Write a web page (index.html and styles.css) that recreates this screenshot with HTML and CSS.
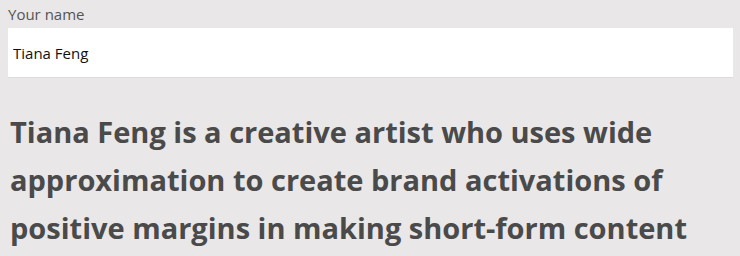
FILE: index.html
```html
<!DOCTYPE html>
<html lang="en">
<head>
    <meta charset="UTF-8">
    <title>Bio generator</title>
    <link rel="stylesheet" href="styles.css">
</head>
<body>
    <div class="form">
        <label class="field-label" for="name">Your name</label>
        <input class="field-input" id="name" type="text" value="Tiana Feng">
    </div>
    <p class="bio">Tiana Feng is a creative artist who uses wide approximation to create brand activations of positive margins in making short-form content</p>
</body>
</html>
```

FILE: styles.css
```css
body {
    margin: 0;
    padding: 0 7px 0 8px;
    background-color: #e9e7e7;
    font-family: 'Open Sans', sans-serif;
}
.form {
    display: flex;
    flex-direction: column;
    padding-top: 4px;
}
.field-label {
    font-size: 15px;
    line-height: 20px;
    color: #555;
    margin-bottom: 4px;
}
.field-input {
    height: 50px;
    box-sizing: border-box;
    border: none;
    border-bottom: 1px solid #dddbdb;
    background: white;
    padding: 0 5px;
    font-family: 'Open Sans', sans-serif;
    font-size: 15px;
    color: #111;
    outline: none;
}
.bio {
    margin: 30px 0 0 2px;
    font-family: 'Open Sans', sans-serif;
    font-weight: 700;
    font-size: 29px;
    line-height: 48px;
    color: #4a4a4a;
}
```
